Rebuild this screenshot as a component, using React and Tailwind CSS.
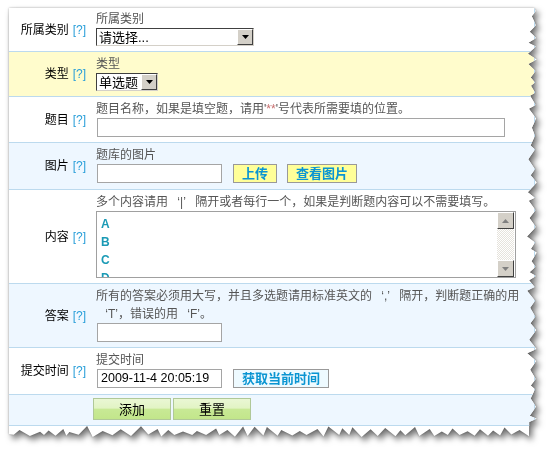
import React from 'react'

// seeded noise so the torn edge is the same every render
function rng(seed) {
  let s = seed
  return () => {
    s = (s * 16807) % 2147483647
    return (s - 1) / 2147483646
  }
}

const W = 528
const H = 429

function tornClip() {
  const r = rng(11)
  const pts = ['0px 0px', `${W - 3}px 0px`]
  let y = 0
  let out = true
  while (y < H - 16) {
    y += 3 + r() * 7
    const x = out ? W - r() * 2.5 : W - 5 - r() * 5
    pts.push(`${x.toFixed(1)}px ${y.toFixed(1)}px`)
    out = !out
  }
  let x = W - 8
  while (x > 4) {
    const yy = out ? H - r() * 2.5 : H - 5 - r() * 6
    pts.push(`${x.toFixed(1)}px ${yy.toFixed(1)}px`)
    x -= 3 + r() * 8
    out = !out
  }
  pts.push(`0px ${H - 3}px`)
  return `polygon(${pts.join(', ')})`
}

// full-width quote marks, like the SimSun original
const Q = ({ children, open }) => (
  <span className={`inline-block w-[12px] ${open ? 'text-right' : 'text-left'}`}>{children}</span>
)

const Label = ({ children }) => (
  <div className="w-[81px] shrink-0 flex items-center justify-end pr-[4px] text-[12px] text-black">
    <span>{children}</span>
    <span className="ml-[4px] text-[#2a9fd9]">[?]</span>
  </div>
)

const Hint = ({ children }) => (
  <div className="text-[12px] leading-[18px] text-[#555] whitespace-nowrap">{children}</div>
)

const Arrow = ({ up, color = '#000' }) => (
  <svg width="7" height="4" viewBox="0 0 7 4">
    <path d={up ? 'M0 4 L3.5 0 L7 4 Z' : 'M0 0 L7 0 L3.5 4 Z'} fill={color} />
  </svg>
)

const Select = ({ value, width }) => (
  <div
    className={`${width} h-[18px] flex bg-white border border-t-[#404040] border-l-[#404040] border-b-[#d4d0c8] border-r-[#d4d0c8]`}
  >
    <div className="flex-1 flex items-center pl-[2px] text-[13px] leading-none text-black overflow-hidden whitespace-nowrap">
      {value}
    </div>
    <div className="w-[16px] h-full bg-[#d4d0c8] border border-t-white border-l-white border-b-[#404040] border-r-[#404040] flex items-center justify-center">
      <Arrow />
    </div>
  </div>
)

const TextInput = ({ width, value }) => (
  <div className={`${width} h-[19px] bg-white border border-[#a5a5a5] flex items-center pl-[3px] text-[12.5px] text-black`}>
    {value}
  </div>
)

const YellowBtn = ({ children, width, light }) => (
  <button
    type="button"
    className={`${width} h-[19px] border border-[#999] ${light ? 'bg-[#eefaff]' : 'bg-[#ffff99]'} text-[13px] font-bold leading-none text-[#0a95d2] flex items-center justify-center`}
  >
    {children}
  </button>
)

const GreenBtn = ({ children }) => (
  <button
    type="button"
    className="w-[78px] h-[22px] border border-[#b0c898] bg-[linear-gradient(#eaf7d4_0%,#e2f4c4_45%,#c8e995_52%,#c2e68b_100%)] text-[13px] leading-none text-black flex items-center justify-center"
  >
    {children}
  </button>
)

const Row = ({ h, bg = 'bg-white', children }) => (
  <div className={`${h} ${bg} flex border-b border-[#bcdaee]`}>{children}</div>
)

export default function App() {
  return (
    <div
      className="w-[555px] h-[453px] bg-white pt-[8px] pl-[9px]"
      style={{ fontFamily: '"Liberation Sans", "Noto Sans CJK SC", sans-serif' }}
    >
      <div className="w-[528px] h-[429px] [filter:drop-shadow(0_0_1px_rgba(0,0,0,0.3))_drop-shadow(3px_4px_3px_rgba(0,0,0,0.55))]">
        <div className="w-[528px] h-[429px] bg-white" style={{ clipPath: tornClip() }}>
          <div className="w-[526px] border-r border-[#bcdaee]">
            <Row h="h-[44px]">
              <Label>所属类别</Label>
              <div className="pl-[6px] pt-[2px]">
                <Hint>所属类别</Hint>
                <Select value="请选择..." width="w-[158px]" />
              </div>
            </Row>

            <Row h="h-[45px]" bg="bg-[#fffccc]">
              <Label>类型</Label>
              <div className="pl-[6px] pt-[3px]">
                <Hint>类型</Hint>
                <Select value="单选题" width="w-[62px]" />
              </div>
            </Row>

            <Row h="h-[46px]">
              <Label>题目</Label>
              <div className="pl-[6px] pt-[3px]">
                <Hint>
                  题目名称，如果是填空题，请用'<span className="text-[#c87070]">**</span>'号代表所需要填的位置。
                </Hint>
                <div className="pl-[1px]">
                  <TextInput width="w-[408px]" />
                </div>
              </div>
            </Row>

            <Row h="h-[47px]" bg="bg-[#eef7ff]">
              <Label>图片</Label>
              <div className="pl-[6px] pt-[3px]">
                <Hint>题库的图片</Hint>
                <div className="flex pl-[1px]">
                  <TextInput width="w-[125px]" />
                  <div className="ml-[11px]">
                    <YellowBtn width="w-[44px]">上传</YellowBtn>
                  </div>
                  <div className="ml-[10px]">
                    <YellowBtn width="w-[70px]">查看图片</YellowBtn>
                  </div>
                </div>
              </div>
            </Row>

            <Row h="h-[94px]">
              <Label>内容</Label>
              <div className="pl-[6px] pt-[3px]">
                <Hint>
                  多个内容请用<Q open>‘</Q>|<Q>’</Q>隔开或者每行一个，如果是判断题内容可以不需要填写。
                </Hint>
                <div className="w-[420px] h-[67px] flex bg-white border border-[#a0a0a0] overflow-hidden">
                  <div className="flex-1 pl-[4px] pt-[3px] text-[12px] font-bold leading-[18px] text-[#1a9ab5]">
                    <div>A</div>
                    <div>B</div>
                    <div>C</div>
                    <div>D</div>
                  </div>
                  <div className="w-[17px] h-full flex flex-col mr-[1px]">
                    <div className="h-[17px] bg-[#d4d0c8] border border-t-white border-l-white border-b-[#404040] border-r-[#404040] flex items-center justify-center">
                      <Arrow up color="#808080" />
                    </div>
                    <div className="flex-1 bg-[repeating-conic-gradient(#e6e3dc_0%_25%,#ffffff_0%_50%)] bg-[length:2px_2px]" />
                    <div className="h-[17px] bg-[#d4d0c8] border border-t-white border-l-white border-b-[#404040] border-r-[#404040] flex items-center justify-center">
                      <Arrow color="#808080" />
                    </div>
                  </div>
                </div>
              </div>
            </Row>

            <Row h="h-[64px]" bg="bg-[#eef7ff]">
              <Label>答案</Label>
              <div className="pl-[6px] pt-[3px]">
                <Hint>
                  所有的答案必须用大写，并且多选题请用标准英文的<Q open>‘</Q>,<Q>’</Q>隔开，判断题正确的用
                  <br />
                  <Q open>‘</Q>T’，错误的用<Q open>‘</Q>F’。
                </Hint>
                <div className="pl-[1px]">
                  <TextInput width="w-[125px]" />
                </div>
              </div>
            </Row>

            <Row h="h-[47px]">
              <Label>提交时间</Label>
              <div className="pl-[6px] pt-[3px]">
                <Hint>提交时间</Hint>
                <div className="flex pl-[1px]">
                  <TextInput width="w-[125px]" value="2009-11-4 20:05:19" />
                  <div className="ml-[11px]">
                    <YellowBtn width="w-[96px]" light>
                      获取当前时间
                    </YellowBtn>
                  </div>
                </div>
              </div>
            </Row>

            <Row h="h-[31px]" bg="bg-[#eef7ff]">
              <div className="w-[81px] shrink-0" />
              <div className="pl-[3px] pt-[3px] flex gap-[2px]">
                <GreenBtn>添加</GreenBtn>
                <GreenBtn>重置</GreenBtn>
              </div>
            </Row>
          </div>
        </div>
      </div>
    </div>
  )
}
